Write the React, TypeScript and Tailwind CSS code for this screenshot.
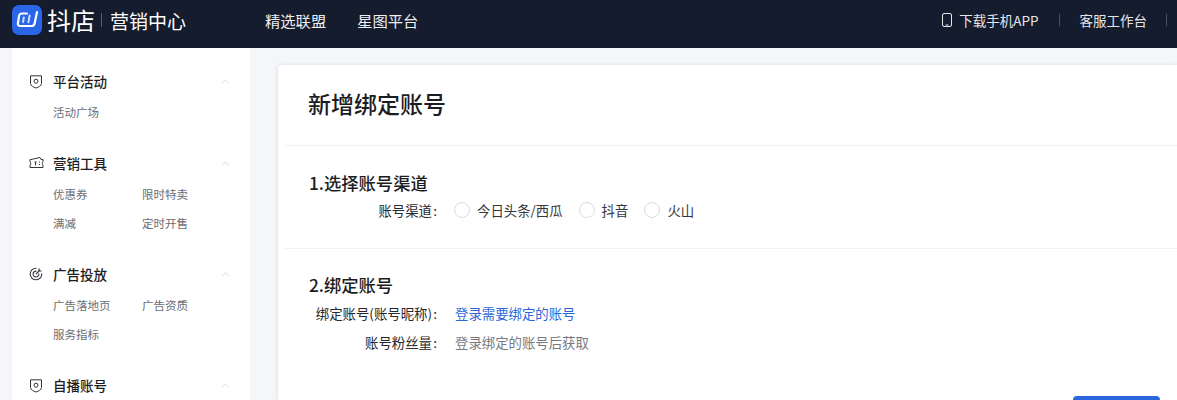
import { ChevronUp } from "lucide-react";

const font = { fontFamily: '"Noto Sans CJK SC", "Inter", sans-serif' };

function ShieldIcon() {
  return (
    <svg width="14" height="15" viewBox="0 0 14 15" fill="none" stroke="#33363d" strokeWidth="1">
      <path d="M1.5 1.8 H12.5 V9.5 C12.5 11.5 9.5 13.3 7 14 C4.5 13.3 1.5 11.5 1.5 9.5 Z" />
      <circle cx="7" cy="7.2" r="2" />
    </svg>
  );
}

function TicketIcon() {
  return (
    <svg width="15" height="14" viewBox="0 0 15 14" fill="none" stroke="#33363d" strokeWidth="1">
      <path d="M2 3.5 L11 1.5 L12 3.5 H14 V6 C13 6.3 13 8.7 14 9 V11.5 H1 V9 C2 8.7 2 6.3 1 6 V3.5 H2" />
      <path d="M5.5 6 H7.5 M6.5 6 V9.5 M10.5 5.5 V6.5 M10.5 8 V9" />
    </svg>
  );
}

function TargetIcon() {
  return (
    <svg width="14" height="14" viewBox="0 0 14 14" fill="none" stroke="#33363d" strokeWidth="1.1">
      <path d="M7.5 1.2 A5.8 5.8 0 1 0 12.8 6.5" />
      <path d="M7.5 4.2 A2.9 2.9 0 1 0 9.8 6.5" />
      <path d="M7 7 L11 3 M10 1.5 V4 H12.5" />
    </svg>
  );
}

function Logo() {
  return (
    <svg width="30" height="30" viewBox="0 0 30 30" fill="none">
      <rect width="30" height="30" rx="7" fill="#2a66e8" />
      <path
        d="M15 8.5 H9.8 C8.2 8.5 7.4 9.4 7.1 10.6 L5.9 18.5 C5.7 20 6.6 21 8 21 H19.5 C21.2 21 22.3 20 22.6 18.5 L25 7"
        stroke="#fff"
        strokeWidth="2.2"
        strokeLinecap="round"
      />
      <path d="M11.8 12.5 L11.1 17 M17.6 10.5 L16.4 17.2" stroke="#cfe0ff" strokeWidth="2" strokeLinecap="round" />
    </svg>
  );
}

const groups = [
  { title: "平台活动", icon: <ShieldIcon />, items: ["活动广场"] },
  { title: "营销工具", icon: <TicketIcon />, items: ["优惠券", "限时特卖", "满减", "定时开售"] },
  { title: "广告投放", icon: <TargetIcon />, items: ["广告落地页", "广告资质", "服务指标"] },
  { title: "自播账号", icon: <ShieldIcon />, items: [] as string[] },
];

function Sidebar() {
  return (
    <aside className="w-[238px] h-[352px] ml-3 bg-white shrink-0 overflow-hidden pl-[17px] pr-[18px] pt-[22px] flex flex-col gap-[30px]">
      {groups.map((g) => (
        <div key={g.title}>
          <div className="flex items-center h-[22px]">
            <div className="w-[24px] flex justify-start">{g.icon}</div>
            <span className="text-[13.5px] font-medium text-[#1b1d22] leading-[22px]">{g.title}</span>
            <ChevronUp className="ml-auto text-[#c4c6cc]" size={13} strokeWidth={1.2} />
          </div>
          {g.items.length > 0 && (
            <div className="grid grid-cols-[89px_1fr] pl-[24px] mt-[10px] gap-y-[9px]">
              {g.items.map((item) => (
                <span key={item} className="text-[11.5px] leading-[20px] text-[#6b6d73]">{item}</span>
              ))}
            </div>
          )}
        </div>
      ))}
    </aside>
  );
}

function Field({ label, children }: { label: string; children: React.ReactNode }) {
  return (
    <div className="flex items-center h-[22px]">
      <span className="w-[154px] text-right text-[13.4px] text-[#26282d] whitespace-nowrap">{label}</span>
      <span className="w-[5px] text-right text-[13.4px] text-[#26282d]">:</span>
      <div className="flex items-center ml-[18px] text-[13.4px]">{children}</div>
    </div>
  );
}

function Radio({ label }: { label: string }) {
  return (
    <label className="flex items-center mr-[16px]">
      <span className="w-[16px] h-[16px] rounded-full border border-[#dcdde0] bg-white mr-[7px]" />
      <span className="text-[13.4px] text-[#33353a]">{label}</span>
    </label>
  );
}

export default function App() {
  return (
    <div className="w-[1177px] h-[400px] overflow-hidden bg-[#f5f6fa] flex flex-col" style={font}>
      <header className="h-[48px] pb-[8px] bg-[#141c2e] flex items-center text-white shrink-0">
        <div className="ml-3 flex"><Logo /></div>
        <span className="ml-[5px] text-[24px] leading-none text-white">抖店</span>
        <span className="w-px h-[14px] bg-[#5a6070] mx-[6px]" />
        <span className="ml-[2px] text-[19px] text-white leading-none">营销中心</span>
        <nav className="ml-[79px] flex gap-[31px] text-[15.3px] text-[#eceef2]">
          <span>精选联盟</span>
          <span>星图平台</span>
        </nav>
        <div className="ml-auto flex items-center text-[13.5px] text-[#e4e6ea]">
          <svg width="10" height="14" viewBox="0 0 10 14" fill="none" stroke="#e4e6ea" strokeWidth="1" className="mr-[7px]">
            <rect x="0.5" y="0.5" width="9" height="13" rx="1.5" />
            <path d="M3.5 12 H6.5" />
          </svg>
          <span>下载手机APP</span>
          <span className="w-px h-[12px] bg-[#4a5060] mx-[20px]" />
          <span>客服工作台</span>
          <span className="w-px h-[12px] bg-[#4a5060] ml-[19px] mr-[10px]" />
        </div>
      </header>
      <div className="flex flex-1 min-h-0">
        <Sidebar />
        <main className="ml-[28px] mt-[17px] flex-1 bg-white rounded-tl-[4px] shadow-[0_0_4px_rgba(0,0,0,0.12)] min-w-0">
          <h1 className="h-[81px] pl-[30px] pt-[19px] text-[23px] leading-[38px] font-medium text-[#1b1d22] border-b border-[#f1f2f4] ml-[6px] -indent-[6px]">新增绑定账号</h1>
          <section className="h-[103px] ml-[6px] border-b border-[#f1f2f4] pt-[24px]">
            <h2 className="pl-[25px] text-[17.3px] leading-[26px] font-medium text-[#1b1d22]">1.选择账号渠道</h2>
            <div className="-ml-[6px] mt-[3px]">
              <Field label="账号渠道">
                <div className="flex items-center -ml-px">
                  <Radio label="今日头条/西瓜" />
                  <Radio label="抖音" />
                  <Radio label="火山" />
                </div>
              </Field>
            </div>
          </section>
          <section className="ml-[6px] pt-[23px]">
            <h2 className="pl-[25px] text-[17.3px] leading-[26px] font-medium text-[#1b1d22]">2.绑定账号</h2>
            <div className="-ml-[6px] mt-[4px] flex flex-col gap-[7px]">
              <Field label="绑定账号(账号昵称)"><span className="text-[#2a66d8]">登录需要绑定的账号</span></Field>
              <Field label="账号粉丝量"><span className="text-[#77797f]">登录绑定的账号后获取</span></Field>
            </div>
            <div className="flex justify-end mt-[43px] pr-[17px]">
              <div className="w-[87px] h-[32px] rounded-[4px] bg-[#2a66e0]" />
            </div>
          </section>
        </main>
      </div>
    </div>
  );
}
